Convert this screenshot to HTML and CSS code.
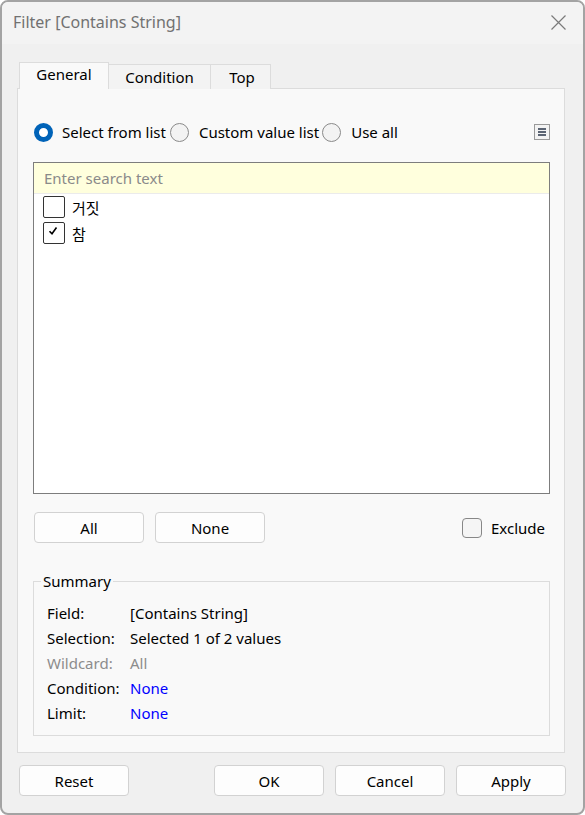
FILE: index.html
```html
<!DOCTYPE html>
<html lang="en">
<head>
    <meta charset="UTF-8">
    <title>Filter [Contains String]</title>
    <link rel="stylesheet" href="styles.css">
</head>
<body>
    <div class="window">
        <div class="titlebar">
            <span class="title">Filter [Contains String]</span>
            <svg class="close" width="15" height="15" viewBox="0 0 15 15">
                <path d="M0.5 0.5 L14.5 14.5 M14.5 0.5 L0.5 14.5" stroke="#7a7a7a" stroke-width="1.2" fill="none"/>
            </svg>
        </div>
        <div class="content">
            <div class="tabs">
                <div class="tab active">General</div>
                <div class="tab">Condition</div>
                <div class="tab">Top</div>
            </div>
            <div class="panel">
                <div class="radio-row">
                    <label class="radio checked"><span class="dot"></span>Select from list</label>
                    <label class="radio"><span class="dot"></span>Custom value list</label>
                    <label class="radio"><span class="dot"></span>Use all</label>
                    <span class="menu-btn">
                        <svg width="16" height="16" viewBox="0 0 16 16">
                            <rect x="0.5" y="0.5" width="15" height="15" fill="#f3f3f3" stroke="#9a9a9a"/>
                            <rect x="4" y="4" width="8" height="2" fill="#5b6473"/>
                            <rect x="4" y="7" width="8" height="2" fill="#5b6473"/>
                            <rect x="4" y="10" width="8" height="2" fill="#5b6473"/>
                        </svg>
                    </span>
                </div>
                <div class="listbox">
                    <div class="search">Enter search text</div>
                    <div class="item"><span class="check"></span>거짓</div>
                    <div class="item"><span class="check on">
                        <svg width="10" height="10" viewBox="0 0 10 10">
                            <path d="M1.5 5.2 L4 7.8 L8.5 1.5" stroke="#000" stroke-width="1.6" fill="none"/>
                        </svg>
                    </span>참</div>
                </div>
                <div class="actions">
                    <button class="btn">All</button>
                    <button class="btn">None</button>
                    <label class="exclude"><span class="box"></span>Exclude</label>
                </div>
                <fieldset class="summary">
                    <legend>Summary</legend>
                    <div class="row"><span class="key">Field:</span><span>[Contains String]</span></div>
                    <div class="row"><span class="key">Selection:</span><span>Selected 1 of 2 values</span></div>
                    <div class="row muted"><span class="key">Wildcard:</span><span>All</span></div>
                    <div class="row"><span class="key">Condition:</span><span class="link">None</span></div>
                    <div class="row"><span class="key">Limit:</span><span class="link">None</span></div>
                </fieldset>
            </div>
            <div class="footer">
                <button class="btn">Reset</button>
                <div class="footer-right">
                    <button class="btn">OK</button>
                    <button class="btn">Cancel</button>
                    <button class="btn">Apply</button>
                </div>
            </div>
        </div>
    </div>
</body>
</html>
```
FILE: styles.css
```css
* {
    margin: 0;
    padding: 0;
    box-sizing: border-box;
}

body {
    width: 585px;
    height: 815px;
    font-family: "Noto Sans", "Noto Sans CJK KR", sans-serif;
    font-size: 15px;
    color: #000;
    background: #ffffff;
}

.window {
    width: 585px;
    height: 815px;
    border: 2px solid #a3a3a3;
    border-radius: 8px;
    background: #f0f0f0;
    overflow: hidden;
}

.titlebar {
    height: 42px;
    background: #f3f3f3;
    display: flex;
    align-items: center;
    justify-content: space-between;
    padding: 0 17px 2px 11px;
}

.title {
    color: #717171;
    font-size: 16px;
}

.content {
    padding: 0 18px 0 15px;
}

/* onglets */
.tabs {
    display: flex;
    align-items: flex-end;
    height: 44px;
    padding-left: 2px;
}

.tab {
    height: 25px;
    line-height: 24px;
    font-size: 15px;
    text-align: center;
    background: #f3f3f3;
    border: 1px solid #dcdcdc;
    border-bottom: none;
    margin-bottom: -1px;
    position: relative;
}

.tab + .tab {
    border-left: none;
}

.tab.active {
    height: 27px;
    width: 90px;
    line-height: 23px;
    background: #f9f9f9;
    z-index: 1;
}

.tab:nth-child(2) {
    width: 102px;
}

.tab:nth-child(3) {
    width: 60px;
    padding-left: 3px;
}

.panel {
    height: 665px;
    background: #f9f9f9;
    border: 1px solid #dcdcdc;
    padding: 33px 14px 0 16px;
}

/* boutons radio */
.radio-row {
    display: flex;
    align-items: center;
    height: 20px;
}

.radio {
    display: flex;
    align-items: center;
    gap: 10px;
    margin-right: 3px;
}

.radio .dot {
    width: 19px;
    height: 19px;
    border-radius: 50%;
    border: 1px solid #8a8a8a;
    background: #f3f3f3;
}

.radio.checked .dot {
    border: 5px solid #0063b8;
    background: #fff;
}

.radio.checked {
    margin-right: 4px;
    gap: 9px;
}

.menu-btn {
    margin-left: auto;
    height: 16px;
}

/* liste */
.listbox {
    margin-top: 20px;
    width: 517px;
    height: 332px;
    border: 1px solid #7d7d7d;
    background: #fff;
    margin-left: -1px;
}

.search {
    height: 31px;
    background: #ffffdd;
    border-bottom: 1px solid #ebebeb;
    color: #8a8a8a;
    line-height: 31px;
    padding-left: 10px;
    font-size: 15px;
}

.item {
    display: flex;
    align-items: center;
    gap: 7px;
    height: 26px;
    padding-left: 9px;
    font-family: "Noto Sans CJK KR", sans-serif;
}

.item:first-of-type {
    margin-top: 2px;
}

.check {
    width: 22px;
    height: 22px;
    border: 1px solid #333;
    border-radius: 2px;
    display: flex;
    align-items: flex-start;
    justify-content: center;
    padding-top: 3px;
    padding-right: 2px;
}

/* actions */
.actions {
    display: flex;
    align-items: center;
    gap: 11px;
    margin-top: 18px;
}

.btn {
    width: 110px;
    height: 31px;
    background: #fdfdfd;
    border: 1px solid #d2d2d2;
    border-radius: 4px;
    font-family: "Noto Sans", sans-serif;
    font-size: 15px;
    color: #000;
}

.exclude {
    margin-left: auto;
    display: flex;
    align-items: center;
    gap: 9px;
    margin-right: 5px;
}

.exclude .box {
    width: 20px;
    height: 20px;
    border: 1px solid #878787;
    border-radius: 4px;
    background: #f5f5f5;
}

/* resume */
.summary {
    margin-top: 28px;
    margin-left: -1px;
    width: 517px;
    border: 1px solid #dcdcdc;
    padding: 10px 0 9px 0;
}

.summary legend {
    margin-left: 7px;
    padding: 0 2px;
    line-height: 20px;
}

.row {
    display: flex;
    height: 25px;
    line-height: 25px;
    padding-left: 13px;
}

.key {
    width: 83px;
}

.muted {
    color: #8c8c8c;
}

.link {
    color: #0000ff;
}

/* bas */
.footer {
    display: flex;
    justify-content: space-between;
    margin: 12px -1px 0 2px;
}

.footer-right {
    display: flex;
    gap: 11px;
}
```
